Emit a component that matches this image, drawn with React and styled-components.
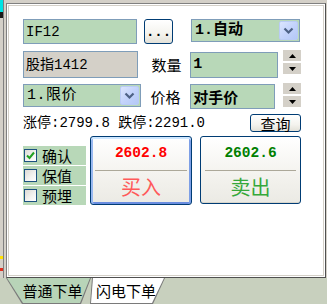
import React from "react";
import styled, { createGlobalStyle } from "styled-components";

const GlobalStyle = createGlobalStyle`
  html, body {
    margin: 0;
    padding: 0;
  }
  body {
    width: 327px;
    height: 304px;
    overflow: hidden;
    background: #d4d0c8;
    font-family: "Noto Sans CJK SC", sans-serif;
  }
`;

const CJK = `"Noto Sans CJK SC", sans-serif`;
const MONO = `"Liberation Mono", "Noto Sans CJK SC", monospace`;

const Screen = styled.div`
  width: 327px;
  height: 304px;
  display: flex;
  flex-direction: column;
  background: #c8d0be;
`;

const TopArea = styled.div`
  height: 278px;
  display: flex;
  background: #d4d0c8;
`;

const EdgeStrip = styled.div`
  width: 3px;
  background: linear-gradient(
    to bottom,
    #00e4e4 0 12px,
    #1a1a1a 12px 18px,
    #d4d0c8 18px 256px,
    #ffe000 256px 259px,
    #d4d0c8 259px 268px,
    #e03020 268px 271px,
    #d4d0c8 271px
  );
`;

const Gutter = styled.div`
  width: 2px;
  border-left: 1px solid #808080;
`;

const PanelColumn = styled.div`
  flex: 1;
  display: flex;
  flex-direction: column;
  padding: 3px 1px 0 0;
`;

const Panel = styled.div`
  flex: 1;
  display: flex;
  border: 1px solid #808080;
  border-right-color: #505050;
  border-bottom-color: #505050;
  padding: 1px;
  background: #fff;
`;

const PanelInner = styled.div`
  flex: 1;
  border: 1px solid #d4d0c8;
  background: #fff;
  padding: 13px 0 0 14px;
  display: flex;
  flex-direction: column;
`;

const Row = styled.div`
  width: 278px;
  height: ${(p) => p.h}px;
  margin-top: ${(p) => p.top || 0}px;
  display: flex;
  align-items: ${(p) => p.align || "center"};
  justify-content: ${(p) => p.justify || "flex-start"};
`;

const Field = styled.div`
  box-sizing: border-box;
  width: ${(p) => p.w}px;
  height: ${(p) => p.h}px;
  margin-left: ${(p) => p.ml || 0}px;
  border: 1px solid #7f9db9;
  background: ${(p) => (p.gray ? "#d4d0c8" : "#b8d8b8")};
  display: flex;
  align-items: center;
  padding-left: 2px;
  font-family: ${(p) => (p.mono ? MONO : CJK)};
  font-size: ${(p) => p.fs || 14}px;
  font-weight: ${(p) => (p.bold ? 700 : 400)};
  color: #000;
  line-height: 1;
  white-space: nowrap;
`;

const Combo = styled.div`
  box-sizing: border-box;
  width: ${(p) => p.w}px;
  height: 23px;
  margin-left: ${(p) => p.ml || 0}px;
  align-self: flex-start;
  border: 1px solid #7f9db9;
  background: #b8d8b8;
  padding: 1px;
  display: flex;
  align-items: center;
`;

const ComboText = styled.span`
  flex: 1;
  padding-left: 2px;
  font-family: ${MONO};
  font-size: 15px;
  font-weight: ${(p) => (p.bold ? 700 : 400)};
  letter-spacing: ${(p) => (p.bold ? 0 : 0.5)}px;
  line-height: 1;
  white-space: nowrap;
`;

const ComboArrow = styled.div`
  box-sizing: border-box;
  width: 19px;
  height: 19px;
  border: 1px solid #b9cbf5;
  border-radius: 2px;
  background: linear-gradient(135deg, #dbe5fd 0%, #c3d3fb 50%, #b4c8f6 100%);
  display: flex;
  align-items: center;
  justify-content: center;
`;

const XPButton = styled.button`
  box-sizing: border-box;
  width: ${(p) => p.w}px;
  height: ${(p) => p.h}px;
  margin: 0 0 0 ${(p) => p.ml || 0}px;
  padding: 0;
  border: 1px solid #003c74;
  border-radius: 3px;
  background: linear-gradient(to bottom, #ffffff 0%, #f4f3ee 60%, #e3e1d8 100%);
  font-family: ${(p) => (p.mono ? MONO : CJK)};
  font-size: ${(p) => p.fs || 14}px;
  font-weight: ${(p) => (p.bold ? 700 : 400)};
  color: #000;
  line-height: 1;
  display: flex;
  align-items: center;
  justify-content: center;
`;

const Label = styled.div`
  box-sizing: border-box;
  width: ${(p) => p.w}px;
  padding-left: ${(p) => p.pl}px;
  font-family: ${CJK};
  font-size: 15px;
  line-height: 1;
  color: #000;
`;

const Spinner = styled.div`
  margin-left: ${(p) => p.ml}px;
  margin-top: -1px;
  align-self: flex-start;
  display: flex;
  flex-direction: column;
  gap: 2px;
`;

const SpinButton = styled.div`
  width: 18px;
  height: 11px;
  background: #d4d0c8;
  display: flex;
  align-items: center;
  justify-content: center;
`;

const LimitText = styled.div`
  font-family: ${MONO};
  font-size: 14px;
  line-height: 1;
  color: #000;
  white-space: nowrap;
`;

const CheckColumn = styled.div`
  width: 63px;
  padding-top: 10px;
  display: flex;
  flex-direction: column;
  gap: 1px;
`;

const CheckRow = styled.label`
  height: 19px;
  background: #b8d8b8;
  display: flex;
  align-items: center;
  padding-left: 1px;
  gap: 5px;
  font-family: ${CJK};
  font-size: 15px;
  line-height: 1;
  color: #000;
`;

const CheckBox = styled.span`
  box-sizing: border-box;
  width: 13px;
  height: 13px;
  border: 1px solid #1c5180;
  background: linear-gradient(135deg, #dcdbd5 0%, #f4f4f1 60%, #ffffff 100%);
  display: flex;
  align-items: center;
  justify-content: center;
`;

const TradeButton = styled.div`
  box-sizing: border-box;
  width: ${(p) => p.w}px;
  height: ${(p) => p.h}px;
  margin-left: ${(p) => p.ml}px;
  border: 1px solid #003c74;
  border-radius: 3px;
  background: linear-gradient(to bottom, #ffffff 0%, #f5f4f0 50%, #ebeae4 100%);
  box-shadow: ${(p) =>
    p.focused
      ? "inset 0 2px 0 #cee7ff, inset 2px 0 0 #98b8f0, inset -2px 0 0 #7d9fe6, inset 0 -2px 0 #6a8de0"
      : "inset 0 -1px 0 #d8d6cc"};
  display: flex;
  flex-direction: column;
  align-self: flex-start;
`;

const PricePart = styled.div`
  height: 33px;
  display: flex;
  align-items: center;
  justify-content: center;
  font-family: ${MONO};
  font-size: 14.5px;
  font-weight: 700;
  color: ${(p) => p.color};
  line-height: 1;
`;

const Divider = styled.div`
  height: 1px;
  margin: 0 4px;
  background: #aca899;
`;

const ActionPart = styled.div`
  flex: 1;
  display: flex;
  align-items: center;
  justify-content: center;
  font-family: ${CJK};
  font-size: 20px;
  color: ${(p) => p.color};
  line-height: 1;
  padding-bottom: 1px;
`;

const TabBar = styled.div`
  flex: 1;
  display: flex;
  padding-left: 6px;
`;

const TabShell = styled.div`
  width: ${(p) => p.w}px;
  height: 26px;
  margin-left: ${(p) => p.ml || 0}px;
  background: #7a7a7a;
  clip-path: ${(p) => p.shape};
  display: flex;
  z-index: ${(p) => p.z};
`;

const TabFace = styled.div`
  flex: 1;
  margin: 0 1px 1px 1px;
  background: ${(p) => p.bg};
  clip-path: ${(p) => p.shape};
  display: flex;
  align-items: center;
  justify-content: center;
  padding-left: ${(p) => p.pl || 0}px;
  font-family: ${CJK};
  font-size: 15px;
  line-height: 1;
  color: #000;
`;

const ChevronDown = () => (
  <svg width="11" height="8" viewBox="0 0 11 8">
    <path d="M1.5 1.5 L5.5 5.5 L9.5 1.5" fill="none" stroke="#4d6185" strokeWidth="2.2" />
  </svg>
);

const Tri = ({ down }) => (
  <svg width="7" height="4" viewBox="0 0 7 4">
    <polygon points={down ? "0,0 7,0 3.5,4" : "3.5,0 7,4 0,4"} fill="#000" />
  </svg>
);

const Check = () => (
  <svg width="9" height="9" viewBox="0 0 9 9">
    <path d="M1 4.5 L3.5 7 L8 1.5" fill="none" stroke="#21a121" strokeWidth="2" />
  </svg>
);

function Spin({ ml }) {
  return (
    <Spinner ml={ml}>
      <SpinButton>
        <Tri />
      </SpinButton>
      <SpinButton>
        <Tri down />
      </SpinButton>
    </Spinner>
  );
}

const options = [
  { label: "确认", checked: true },
  { label: "保值", checked: false },
  { label: "预埋", checked: false },
];

const tab1Shape = "polygon(0 0, 100% 0, calc(100% - 10px) 100%, 16px 100%)";
const tab2Shape = "polygon(5px 0, 100% 0, calc(100% - 12px) 100%, 3px 100%)";

export default function App() {
  return (
    <Screen>
      <GlobalStyle />
      <TopArea>
        <EdgeStrip />
        <Gutter />
        <PanelColumn>
          <Panel>
            <PanelInner>
              <Row h={25}>
                <Field w={114} h={25} mono>
                  IF12
                </Field>
                <XPButton w={29} h={25} ml={7} mono bold>
                  ...
                </XPButton>
                <Combo w={109} ml={18}>
                  <ComboText bold>1.自动</ComboText>
                  <ComboArrow>
                    <ChevronDown />
                  </ComboArrow>
                </Combo>
              </Row>

              <Row h={27} top={7}>
                <Field w={115} h={27} gray mono>
                  股指1412
                </Field>
                <Label w={53} pl={14}>
                  数量
                </Label>
                <Field w={88} h={26} mono bold fs={15}>
                  1
                </Field>
                <Spin ml={5} />
              </Row>

              <Row h={25} top={6}>
                <Combo w={118}>
                  <ComboText>1.限价</ComboText>
                  <ComboArrow>
                    <ChevronDown />
                  </ComboArrow>
                </Combo>
                <Label w={50} pl={10}>
                  价格
                </Label>
                <Field w={85} h={25} bold fs={15}>
                  对手价
                </Field>
                <Spin ml={8} />
              </Row>

              <Row h={18} top={5} justify="space-between">
                <LimitText>涨停:2799.8 跌停:2291.0</LimitText>
                <XPButton w={51} h={18} fs={15}>
                  查询
                </XPButton>
              </Row>

              <Row h={69} top={4} align="flex-start">
                <CheckColumn>
                  {options.map((o) => (
                    <CheckRow key={o.label}>
                      <CheckBox>{o.checked && <Check />}</CheckBox>
                      {o.label}
                    </CheckRow>
                  ))}
                </CheckColumn>
                <TradeButton w={102} h={69} ml={4} focused>
                  <PricePart color="#ff0000">2602.8</PricePart>
                  <Divider />
                  <ActionPart color="#ff5a5a">买入</ActionPart>
                </TradeButton>
                <TradeButton w={101} h={68} ml={8}>
                  <PricePart color="#008000">2602.6</PricePart>
                  <Divider />
                  <ActionPart color="#35a83a">卖出</ActionPart>
                </TradeButton>
              </Row>
            </PanelInner>
          </Panel>
        </PanelColumn>
      </TopArea>

      <TabBar>
        <TabShell w={85} shape={tab1Shape} z={1}>
          <TabFace bg="#b8d4b8" shape={tab1Shape} pl={8}>
            普通下单
          </TabFace>
        </TabShell>
        <TabShell w={78} ml={-4} shape={tab2Shape} z={2}>
          <TabFace bg="#ffffff" shape={tab2Shape} pl={0}>
            闪电下单
          </TabFace>
        </TabShell>
      </TabBar>
    </Screen>
  );
}
